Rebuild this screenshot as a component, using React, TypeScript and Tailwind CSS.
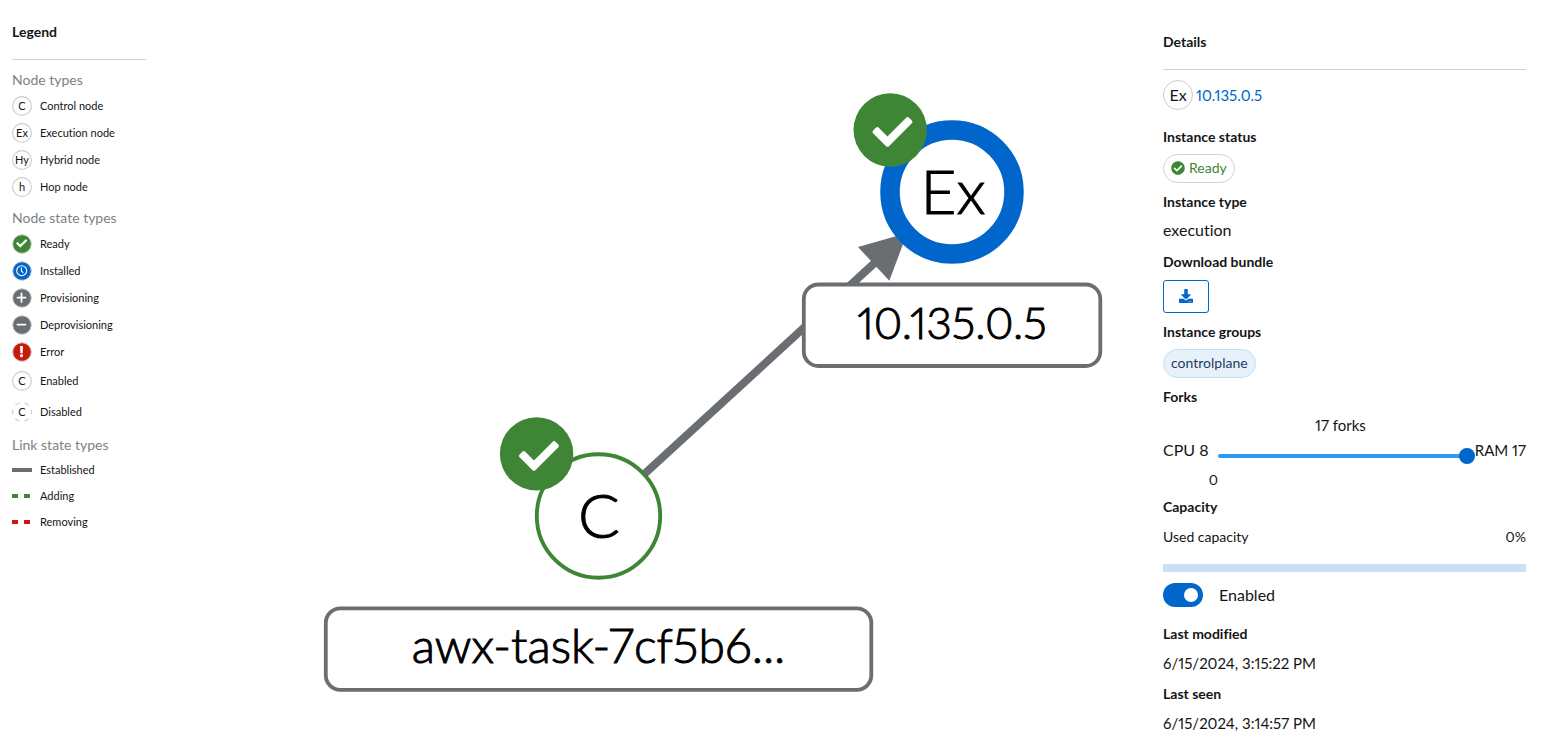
import { useState, type ReactNode } from "react";

const CHECK =
  "M173.898 439.404l-166.4-166.4c-9.997-9.997-9.997-26.206 0-36.204l36.203-36.204c9.997-9.998 26.207-9.998 36.204 0L192 312.69 432.095 72.596c9.997-9.997 26.207-9.997 36.204 0l36.203 36.204c9.997 9.997 9.997 26.206 0 36.204l-294.4 294.401c-9.998 9.997-26.207 9.997-36.204-.001z";
const CHECK_CIRCLE =
  "M504 256c0 136.967-111.033 248-248 248S8 392.967 8 256 119.033 8 256 8s248 111.033 248 248zM227.314 387.314l184-184c6.248-6.248 6.248-16.379 0-22.627l-22.627-22.627c-6.248-6.249-16.379-6.249-22.628 0L216 308.118l-70.059-70.059c-6.248-6.248-16.379-6.248-22.628 0l-22.627 22.627c-6.248 6.248-6.248 16.379 0 22.627l104 104c6.249 6.249 16.379 6.249 22.628.001z";
const DOWNLOAD =
  "M216 0h80c13.300 0 24 10.700 24 24v168h87.700c17.800 0 26.700 21.500 14.100 34.100L269.700 378.300c-7.500 7.500-19.800 7.500-27.300 0L90.100 226.100c-12.600-12.600-3.700-34.100 14.100-34.100H192V24c0-13.300 10.700-24 24-24zm296 376v112c0 13.300-10.700 24-24 24H24c-13.300 0-24-10.700-24-24V376c0-13.300 10.700-24 24-24h146.700l49 49c20.100 20.100 52.500 20.100 72.600 0l49-49H488c13.300 0 24 10.700 24 24zm-124 88c0-11-9-20-20-20s-20 9-20 20 9 20 20 20 20-9 20-20zm64 0c0-11-9-20-20-20s-20 9-20 20 9 20 20 20 20-9 20-20z";

function TypeBadge({ text, dashed = false }: { text: string; dashed?: boolean }) {
  return (
    <span className="relative flex size-5 items-center justify-center text-[11px] leading-none text-[#151515]">
      <svg viewBox="0 0 20 20" className="absolute inset-0 size-5" aria-hidden="true">
        <circle cx="10" cy="10" r="9.4" fill="none" stroke="#ccc" strokeWidth="1.1" strokeDasharray={dashed ? "5 4.84" : undefined} strokeDashoffset={dashed ? 2.5 : undefined} />
      </svg>
      {text}
    </span>
  );
}

function StateBadge({ fill, children }: { fill: string; children: ReactNode }) {
  return (
    <svg viewBox="0 0 20 20" className="size-5" aria-hidden="true">
      <circle cx="10" cy="10" r="9.3" fill={fill} stroke="#ccc" strokeWidth="1" />
      {children}
    </svg>
  );
}

function LinkSample({ color, dashed = false }: { color: string; dashed?: boolean }) {
  return (
    <svg viewBox="0 0 20 4" className="h-1 w-5" aria-hidden="true">
      <path d="M0 2H20" stroke={color} strokeWidth="4" strokeDasharray={dashed ? "6 6" : undefined} />
    </svg>
  );
}

function LegendRow({ icon, label, height = "h-[27px]" }: { icon: ReactNode; label: string; height?: string }) {
  return (
    <li className={`flex items-center gap-2 ${height}`}>
      {icon}
      <span className="text-[11px] leading-4 text-[#151515]">{label}</span>
    </li>
  );
}

function LegendHeading({ children }: { children: ReactNode }) {
  return <h3 className="text-sm leading-6 text-[#7d8186]">{children}</h3>;
}

function Legend() {
  return (
    <section className="w-[158px] shrink-0 px-3 pt-5" aria-label="Legend">
      <h2 className="border-b border-[#d2d2d2] pb-[15px] text-sm leading-6 font-bold text-[#151515]">Legend</h2>
      <div className="flex flex-col gap-[6px] pt-2">
        <div>
          <LegendHeading>Node types</LegendHeading>
          <ul>
            <LegendRow icon={<TypeBadge text="C" />} label="Control node" />
            <LegendRow icon={<TypeBadge text="Ex" />} label="Execution node" />
            <LegendRow icon={<TypeBadge text="Hy" />} label="Hybrid node" />
            <LegendRow icon={<TypeBadge text="h" />} label="Hop node" />
          </ul>
        </div>
        <div>
          <LegendHeading>Node state types</LegendHeading>
          <ul>
            <LegendRow
              label="Ready"
              icon={
                <StateBadge fill="#3e8635">
                  <path d={CHECK} fill="#fff" transform="translate(4.200 3.900) scale(.0215)" />
                </StateBadge>
              }
            />
            <LegendRow
              label="Installed"
              icon={
                <StateBadge fill="#06c">
                  <circle cx="9.700" cy="9.700" r="5" fill="none" stroke="#fff" strokeWidth="1.100" />
                  <path d="M9.400 6.500v3.500l2 1.800" fill="none" stroke="#fff" strokeWidth="1.100" />
                </StateBadge>
              }
            />
            <LegendRow
              label="Provisioning"
              icon={
                <StateBadge fill="#6a6e73">
                  <path d="M5.500 9.700h8M9.500 5.500v8.400" stroke="#fff" strokeWidth="1.800" strokeLinecap="round" />
                </StateBadge>
              }
            />
            <LegendRow
              label="Deprovisioning"
              icon={
                <StateBadge fill="#6a6e73">
                  <path d="M5.500 9.600h8" stroke="#fff" strokeWidth="1.800" strokeLinecap="round" />
                </StateBadge>
              }
            />
            <LegendRow
              label="Error"
              icon={
                <StateBadge fill="#c9190b">
                  <path d="M8 4h3l-.4 7.200H8.400z" fill="#fff" />
                  <circle cx="9.500" cy="13.700" r="1.600" fill="#fff" />
                </StateBadge>
              }
            />
            <LegendRow height="h-[31px]" icon={<TypeBadge text="C" />} label="Enabled" />
            <LegendRow height="h-[31px]" icon={<TypeBadge text="C" dashed />} label="Disabled" />
          </ul>
        </div>
        <div>
          <LegendHeading>Link state types</LegendHeading>
          <ul>
            <LegendRow height="h-[26px]" icon={<LinkSample color="#6a6e73" />} label="Established" />
            <LegendRow height="h-[26px]" icon={<LinkSample color="#3e8635" dashed />} label="Adding" />
            <LegendRow height="h-[26px]" icon={<LinkSample color="#c9190b" dashed />} label="Removing" />
          </ul>
        </div>
      </div>
    </section>
  );
}

function Topology() {
  return (
    <svg viewBox="158 0 992 744" className="h-full w-full" role="img" aria-label="Topology view">
      <path d="M598.500 516L874 263.500" stroke="#6a6e73" strokeWidth="8" />
      <path d="M858 247L907.200 233L889.300 280.800z" fill="#6a6e73" />

      <circle cx="598.500" cy="516" r="61.700" fill="#fff" stroke="#3e8635" strokeWidth="3.900" />
      <text x="599" y="538" textAnchor="middle" className="fill-black stroke-black stroke-1 text-[62px] font-light">C</text>
      <circle cx="536.600" cy="453.900" r="36.700" fill="#3e8635" />
      <path d={CHECK} fill="#fff" transform="translate(519 436) scale(.078)" />
      <rect x="325.800" y="608.300" width="545.500" height="81.500" rx="14.500" fill="#fff" stroke="#6a6e73" strokeWidth="3.800" />
      <text x="598.500" y="663" textAnchor="middle" className="fill-black stroke-black stroke-1 text-[48px] font-light">awx-task-7cf5b6...</text>

      <circle cx="952" cy="192" r="62" fill="#fff" stroke="#06c" strokeWidth="19.500" />
      <text x="953" y="214" textAnchor="middle" className="fill-black stroke-black stroke-1 text-[62px] font-light">Ex</text>
      <circle cx="890.200" cy="130" r="36.700" fill="#3e8635" />
      <path d={CHECK} fill="#fff" transform="translate(872.500 112) scale(.078)" />
      <rect x="803.800" y="284.500" width="296.500" height="81.500" rx="14.500" fill="#fff" stroke="#6a6e73" strokeWidth="3.800" />
      <text x="952" y="339" textAnchor="middle" className="fill-black stroke-black stroke-1 text-[44px] font-light">10.135.0.5</text>
    </svg>
  );
}

function Term({ children }: { children: ReactNode }) {
  return <dt className="text-sm leading-6 font-bold text-[#151515]">{children}</dt>;
}

function Details() {
  const [forks, setForks] = useState(17);
  const [enabled, setEnabled] = useState(true);
  return (
    <aside className="w-[409px] shrink-0 pt-[30px] pr-[33px] pl-[13px] text-base leading-6 text-[#151515]" aria-label="Details">
      <h2 className="border-b border-[#d2d2d2] pb-[15px] text-sm leading-6 font-bold">Details</h2>
      <div className="flex items-center gap-[3px] pt-[10px]">
        <span className="flex size-[30px] items-center justify-center rounded-full border border-[#ccc]">Ex</span>
        <a href="#instance" className="text-[15px] leading-6 text-[#06c]">10.135.0.5</a>
      </div>
      <dl className="flex flex-col gap-[7px] pt-[15px]">
        <div>
          <Term>Instance status</Term>
          <dd className="flex pt-[5px]">
            <span className="flex h-[29px] items-center gap-1 rounded-full border border-[#d2d2d2] px-[7px] pb-px text-sm text-[#3e8635]">
              <svg viewBox="0 0 512 512" className="size-[14px]" fill="currentColor" aria-hidden="true">
                <path d={CHECK_CIRCLE} />
              </svg>
              Ready
            </span>
          </dd>
        </div>
        <div>
          <Term>Instance type</Term>
          <dd className="pt-1 pb-px">execution</dd>
        </div>
        <div>
          <Term>Download bundle</Term>
          <dd className="flex pt-[6px]">
            <button type="button" aria-label="Download bundle" className="flex h-[33px] w-[46px] items-center justify-center rounded-[3px] border border-[#06c] pb-px text-[#06c]">
              <svg viewBox="0 0 512 512" className="size-[14px]" fill="currentColor" aria-hidden="true">
                <path d={DOWNLOAD} />
              </svg>
            </button>
          </dd>
        </div>
        <div>
          <Term>Instance groups</Term>
          <dd className="flex pt-[5px]">
            <span className="flex h-[29px] items-center rounded-full border border-[#bee1f4] bg-[#e7f1fa] px-[7px] pb-px text-sm text-[#1f3a63]">controlplane</span>
          </dd>
        </div>
        <div>
          <Term>Forks</Term>
          <dd className="pt-1">
            <label htmlFor="forks" className="block pl-[152px] text-[15px] leading-6">{forks} forks</label>
            <div className="flex items-start pt-px">
              <span className="w-[55px] shrink-0">CPU 8</span>
              <input
                id="forks"
                type="range"
                min={8}
                max={17}
                value={forks}
                onChange={(e) => setForks(Number(e.target.value))}
                className="mt-[10px] h-4 min-w-0 flex-1 appearance-none bg-transparent [&::-webkit-slider-runnable-track]:h-1 [&::-webkit-slider-runnable-track]:rounded-full [&::-webkit-slider-runnable-track]:bg-[#2b9af3] [&::-webkit-slider-thumb]:-mt-[6px] [&::-webkit-slider-thumb]:size-4 [&::-webkit-slider-thumb]:appearance-none [&::-webkit-slider-thumb]:rounded-full [&::-webkit-slider-thumb]:bg-[#06c]"
              />
              <span className="shrink-0 text-[15px] leading-6">RAM 17</span>
            </div>
            <div className="w-[55px] pt-1 text-right text-sm leading-6">0</div>
          </dd>
        </div>
        <div className="-mt-1">
          <Term>Capacity</Term>
          <dd className="pt-[6px] text-sm leading-6">
            <div className="flex justify-between">
              <span>Used capacity</span>
              <span>0%</span>
            </div>
            <div role="progressbar" aria-label="Used capacity" aria-valuenow={0} className="mt-[15px] h-2 bg-[#ccdff4]" />
            <label className="mt-[11px] flex items-center gap-4 text-base leading-6">
              <input
                type="checkbox"
                role="switch"
                checked={enabled}
                onChange={(e) => setEnabled(e.target.checked)}
                className="flex h-6 w-10 appearance-none items-center rounded-full bg-[#6a6e73] px-[5px] before:size-[14px] before:rounded-full before:bg-white checked:justify-end checked:bg-[#06c]"
              />
              Enabled
            </label>
          </dd>
        </div>
        <div className="pt-2">
          <Term>Last modified</Term>
          <dd className="pt-[5px] text-[15px] leading-6">6/15/2024, 3:15:22 PM</dd>
        </div>
        <div>
          <Term>Last seen</Term>
          <dd className="pt-[5px] text-[15px] leading-6">6/15/2024, 3:14:57 PM</dd>
        </div>
      </dl>
    </aside>
  );
}

export default function App() {
  return (
    <div className="flex min-h-screen bg-white font-['Lato',sans-serif] proportional-nums [font-variant-ligatures:none]">
      <Legend />
      <main className="min-w-0 flex-1">
        <Topology />
      </main>
      <Details />
    </div>
  );
}
